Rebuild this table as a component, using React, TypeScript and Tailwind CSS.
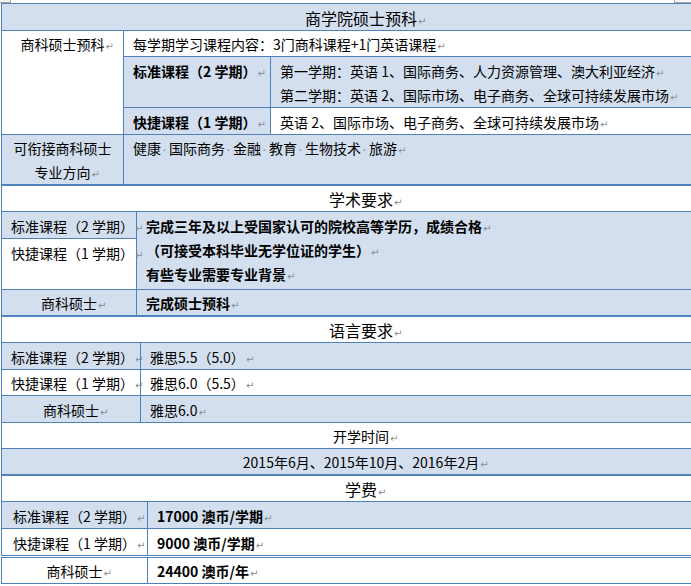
import React from "react";

// Word-style paragraph mark; takes no width so centred text stays centred on the words
function Mark() {
  return (
    <span className="inline-block w-[9px] mr-[-9px] pl-[1px] text-[10px] leading-none text-[#8c8c8c] font-normal font-['DejaVu_Sans',sans-serif]">
      ↵
    </span>
  );
}

// space marker shown between the subject areas
function Dot() {
  return (
    <span className="inline-block w-[8px] pl-[1px] text-left text-[#8c8c8c] font-normal font-['Liberation_Sans',sans-serif]">
      ·
    </span>
  );
}

const cell = "border border-[#4f81bd] px-[9px] pt-[2px] pb-0 align-top whitespace-nowrap leading-[24px] text-[14px] text-black";
const blue = "bg-[#d3dfee]";
const head = `${cell} text-center text-[16px]`;
// rows that sit one pixel lower in Word's layout
const tight = "[&>td]:pt-px";

export default function App() {
  return (
    <div className="w-[691px] h-[586px] overflow-hidden bg-white font-['Noto_Sans_CJK_SC',sans-serif]">
      <div className="flex h-[3px] justify-between">
        <div className="w-[11px] border-r border-b border-[#a6a6a6] bg-[#f2f2f2]" />
        <div className="w-[17px] border-l border-b border-[#a6a6a6] bg-[#f7f7f7]" />
      </div>

      <div className="ml-[1px] w-[720px]">
        {/* 商学院硕士预科 */}
        <table className="w-[720px] table-fixed border-collapse">
          <colgroup>
            <col className="w-[122px]" />
            <col className="w-[147px]" />
            <col />
          </colgroup>
          <tbody>
            <tr className={blue}>
              <td colSpan={3} className={head}>
                商学院硕士预科<Mark />
              </td>
            </tr>
            <tr className={tight}>
              <td rowSpan={3} className={`${cell} text-center`}>
                商科硕士预科<Mark />
              </td>
              <td colSpan={2} className={cell}>
                每学期学习课程内容：3门商科课程+1门英语课程<Mark />
              </td>
            </tr>
            <tr className={blue}>
              <td className={`${cell} font-bold`}>
                标准课程（2 学期）<Mark />
              </td>
              <td className={cell}>
                <div>
                  第一学期：英语 1、国际商务、人力资源管理、澳大利亚经济<Mark />
                </div>
                <div>
                  第二学期：英语 2、国际市场、电子商务、全球可持续发展市场<Mark />
                </div>
              </td>
            </tr>
            <tr>
              <td className={`${cell} ${blue} font-bold`}>
                快捷课程（1 学期）<Mark />
              </td>
              <td className={cell}>
                英语 2、国际市场、电子商务、全球可持续发展市场<Mark />
              </td>
            </tr>
            <tr className={`${blue} ${tight}`}>
              <td className={`${cell} text-center`}>
                <div>可衔接商科硕士</div>
                <div>
                  专业方向<Mark />
                </div>
              </td>
              <td colSpan={2} className={cell}>
                健康<Dot />国际商务<Dot />金融<Dot />教育<Dot />生物技术<Dot />旅游<Mark />
              </td>
            </tr>
          </tbody>
        </table>

        {/* 学术要求 */}
        <table className="w-[720px] table-fixed border-collapse">
          <colgroup>
            <col className="w-[135px]" />
            <col />
          </colgroup>
          <tbody>
            <tr className={tight}>
              <td colSpan={2} className={head}>
                学术要求<Mark />
              </td>
            </tr>
            <tr>
              <td className={`${cell} ${blue} text-center`}>
                标准课程（2 学期）<Mark />
              </td>
              <td rowSpan={2} className={`${cell} ${blue} font-bold`}>
                <div>
                  完成三年及以上受国家认可的院校高等学历，成绩合格<Mark />
                </div>
                <div>
                  （可接受本科毕业无学位证的学生）<Mark />
                </div>
                <div>
                  有些专业需要专业背景<Mark />
                </div>
              </td>
            </tr>
            <tr>
              <td className={`${cell} text-center h-[51px]`}>
                快捷课程（1 学期）<Mark />
              </td>
            </tr>
            <tr className={`${blue} ${tight}`}>
              <td className={`${cell} text-center`}>
                商科硕士<Mark />
              </td>
              <td className={`${cell} font-bold`}>
                完成硕士预科<Mark />
              </td>
            </tr>
          </tbody>
        </table>

        {/* 语言要求 + 开学时间 */}
        <table className="w-[720px] table-fixed border-collapse">
          <colgroup>
            <col className="w-[139px]" />
            <col />
          </colgroup>
          <tbody>
            <tr className={tight}>
              <td colSpan={2} className={head}>
                语言要求<Mark />
              </td>
            </tr>
            <tr className={blue}>
              <td className={`${cell} text-center`}>
                标准课程（2 学期）<Mark />
              </td>
              <td className={cell}>
                雅思5.5（5.0）<Mark />
              </td>
            </tr>
            <tr className={tight}>
              <td className={`${cell} text-center`}>
                快捷课程（1 学期）<Mark />
              </td>
              <td className={cell}>
                雅思6.0（5.5）<Mark />
              </td>
            </tr>
            <tr className={blue}>
              <td className={`${cell} text-center`}>
                商科硕士<Mark />
              </td>
              <td className={cell}>
                雅思6.0<Mark />
              </td>
            </tr>
            <tr className={tight}>
              <td colSpan={2} className={`${cell} text-center`}>
                开学时间<Mark />
              </td>
            </tr>
            <tr className={`${blue} ${tight}`}>
              <td colSpan={2} className={`${cell} text-center`}>
                2015年6月、2015年10月、2016年2月<Mark />
              </td>
            </tr>
          </tbody>
        </table>

        {/* 学费 */}
        <table className="w-[720px] table-fixed border-collapse">
          <colgroup>
            <col className="w-[146px]" />
            <col />
          </colgroup>
          <tbody>
            <tr className={tight}>
              <td colSpan={2} className={head}>
                学费<Mark />
              </td>
            </tr>
            <tr className={blue}>
              <td className={`${cell} text-center`}>
                标准课程（2 学期）<Mark />
              </td>
              <td className={`${cell} font-bold`}>
                17000 澳币/学期<Mark />
              </td>
            </tr>
            <tr>
              <td className={`${cell} text-center`}>
                快捷课程（1 学期）<Mark />
              </td>
              <td className={`${cell} font-bold`}>
                9000 澳币/学期<Mark />
              </td>
            </tr>
          </tbody>
        </table>
        <table className="mt-px w-[720px] table-fixed border-collapse">
          <colgroup>
            <col className="w-[146px]" />
            <col />
          </colgroup>
          <tbody>
            <tr className={tight}>
              <td className={`${cell} text-center`}>
                商科硕士<Mark />
              </td>
              <td className={`${cell} font-bold`}>
                24400 澳币/年<Mark />
              </td>
            </tr>
          </tbody>
        </table>
      </div>
    </div>
  );
}
